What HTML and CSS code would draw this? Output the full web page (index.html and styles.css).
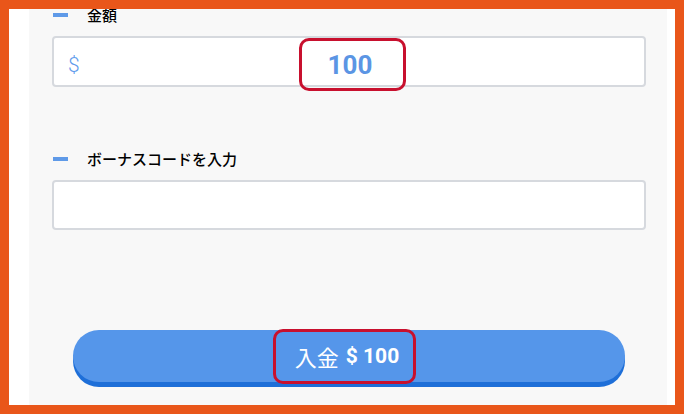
FILE: index.html
```html
<!DOCTYPE html>
<html lang="ja">
<head>
<meta charset="utf-8">
<link rel="stylesheet" href="styles.css">
</head>
<body>
<div class="frame">
  <div class="panel">
    <div class="content">
      <div class="label"><span class="dash"></span><span class="label-text">金額</span></div>
      <div class="field amount">
        <span class="currency">$</span>
        <span class="value">100</span>
        <span></span>
      </div>
      <div class="label label-bonus"><span class="dash"></span><span class="label-text">ボーナスコードを入力</span></div>
      <div class="field bonus"></div>
      <div class="btn-row">
        <button class="deposit"><span class="btn-mark"><span class="btn-jp">入金</span> <span class="btn-amt">$ 100</span></span></button>
      </div>
    </div>
  </div>
</div>
</body>
</html>
```

FILE: styles.css
```css
html, body {
  margin: 0;
  padding: 0;
  background: #ffffff;
}
.frame {
  width: 684px;
  height: 414px;
  box-sizing: border-box;
  border: 9px solid #e9561a;
  background: #ffffff;
  padding: 0 8px 0 20px;
  overflow: hidden;
}
.panel {
  height: 100%;
  background: #f8f8f8;
  overflow: hidden;
}
.content {
  margin-top: -4px;
  padding: 0 21px 0 23px;
  display: flex;
  flex-direction: column;
}
.label {
  height: 20px;
  display: flex;
  align-items: center;
  font-family: "Noto Sans CJK JP", sans-serif;
  font-size: 15px;
  font-weight: 500;
  color: #000000;
}
.dash {
  width: 15px;
  height: 4px;
  background: #5f9ae8;
  margin-left: 1px;
  margin-right: 19px;
}
.label-text {
  line-height: 20px;
}
.field {
  margin-top: 11px;
  box-sizing: border-box;
  background: #ffffff;
  border: 2px solid #d6d9de;
  border-radius: 4px;
}
.amount {
  height: 51px;
  display: grid;
  grid-template-columns: 1fr auto 1fr;
  align-items: center;
  padding-left: 7px;
}
.currency {
  font-family: Roboto, sans-serif;
  font-weight: 300;
  font-size: 21px;
  color: #5f9cec;
  justify-self: start;
  margin-left: 7px;
}
.value {
  box-sizing: border-box;
  height: 53px;
  display: flex;
  align-items: center;
  padding: 0 31px 0 26px;
  border: 3px solid #c8102e;
  border-radius: 10px;
  font-family: Roboto, sans-serif;
  font-weight: 700;
  font-size: 26px;
  color: #5b95e4;
}
.label-bonus {
  margin-top: 62px;
}
.bonus {
  height: 50px;
}
.btn-row {
  margin-top: 100px;
  padding: 0 21px;
}
.deposit {
  width: 100%;
  height: 52px;
  border: 0;
  border-radius: 27px;
  background: #5596ea;
  box-shadow: 0 5px 0 #1e6fd8;
  display: flex;
  align-items: center;
  justify-content: center;
  padding: 0;
  color: #ffffff;
}
.btn-mark {
  box-sizing: border-box;
  height: 55px;
  display: flex;
  align-items: center;
  gap: 7px;
  padding: 0 14px 0 19px;
  border: 3px solid #c8102e;
  border-radius: 10px;
  margin-left: -9px;
}
.btn-jp {
  font-family: "Noto Sans CJK JP", sans-serif;
  font-weight: 400;
  font-size: 22px;
}
.btn-amt {
  font-family: Roboto, sans-serif;
  font-weight: 700;
  font-size: 21px;
}
```
